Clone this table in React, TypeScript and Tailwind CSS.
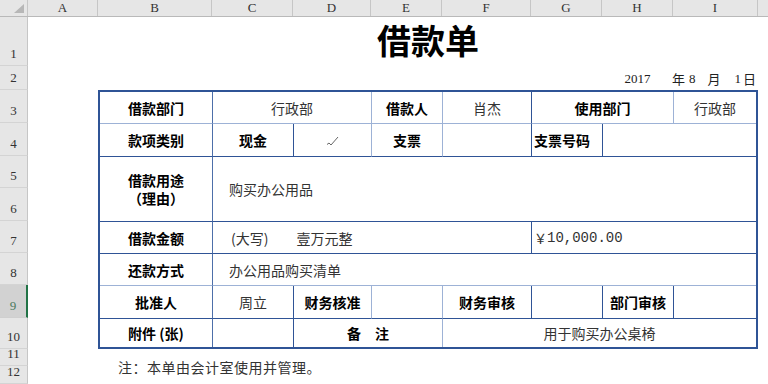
import type { ReactNode } from 'react';

// border edge styles for the loan form
const R_DARK = 'border-r border-r-[#2f5496]';
const R_MED = 'border-r border-r-[#4d6fa9]';
const R_LIGHT = 'border-r border-r-[#9db2d6]';
const B_DARK = 'border-b border-b-[#2f5496]';
const B_LIGHT = 'border-b border-b-[#9db2d6]';

const cols = [
  { label: 'A', w: 'w-[70px]' },
  { label: 'B', w: 'w-[114px]' },
  { label: 'C', w: 'w-[81px]' },
  { label: 'D', w: 'w-[78px]' },
  { label: 'E', w: 'w-[71px]' },
  { label: 'F', w: 'w-[89px]' },
  { label: 'G', w: 'w-[71px]' },
  { label: 'H', w: 'w-[71px]' },
  { label: 'I', w: 'w-[85px]' },
];

const rows = [
  { n: 1, h: 'h-[49px]' },
  { n: 2, h: 'h-[24px]' },
  { n: 3, h: 'h-[33px]' },
  { n: 4, h: 'h-[33px]' },
  { n: 5, h: 'h-[32px]' },
  { n: 6, h: 'h-[33px]' },
  { n: 7, h: 'h-[32px]' },
  { n: 8, h: 'h-[32px]' },
  { n: 9, h: 'h-[33px]' },
  { n: 10, h: 'h-[31px]' },
  { n: 11, h: 'h-[17px]' },
  { n: 12, h: 'h-[18px]' },
];

const Cell = ({ className = '', children }: { className?: string; children?: ReactNode }) => (
  <div className={`flex items-center text-[14px] leading-none ${className}`}>{children}</div>
);

const Label = ({ className = '', children }: { className?: string; children?: ReactNode }) => (
  <Cell className={`justify-center font-bold text-black ${className}`}>{children}</Cell>
);

const Value = ({ className = '', children }: { className?: string; children?: ReactNode }) => (
  <Cell className={`text-[#333] ${className}`}>{children}</Cell>
);

const Check = () => (
  <svg width="13" height="11" viewBox="0 0 13 11" className="mt-[2px]">
    <polyline points="1,8.5 3,7 5,9 12,1" fill="none" stroke="#666" strokeWidth="1" />
  </svg>
);

const App = () => {
  return (
    <div className="w-[768px] h-[384px] overflow-hidden bg-white flex flex-col font-['Noto_Sans_CJK_SC',sans-serif]">
      {/* column headers */}
      <div className="flex h-[17px] shrink-0 bg-[#e6e6e6] border-b border-[#b9b9b9] font-['Liberation_Serif',serif] text-[13px] text-[#333]">
        <div className="w-[28px] border-r border-[#c6c6c6] flex items-end justify-end pr-[3px] pb-[3px]">
          <svg width="10" height="9" viewBox="0 0 10 9">
            <polygon points="10,0 10,9 0,9" fill="#b7b7b7" />
          </svg>
        </div>
        {cols.map((c) => (
          <div key={c.label} className={`${c.w} border-r border-[#c6c6c6] flex items-center justify-center`}>
            {c.label}
          </div>
        ))}
        <div className="flex-1" />
      </div>

      <div className="flex flex-1">
        {/* row headers */}
        <div className="w-[28px] shrink-0 flex flex-col bg-[#e6e6e6] font-['Liberation_Serif',serif] text-[13px] text-[#333]">
          {rows.map((r) =>
            r.n === 9 ? (
              <div key={r.n} className={`${r.h} flex items-end justify-center pb-[2px] bg-[#d2d2d2] text-[#4b7a5f] border-r-2 border-r-[#217346] border-b border-b-[#cfcfcf]`}>
                {r.n}
              </div>
            ) : (
              <div key={r.n} className={`${r.h} flex items-end justify-center pb-[2px] border-r border-r-[#c6c6c6] border-b border-b-[#d4d4d4]`}>
                {r.n}
              </div>
            )
          )}
        </div>

        {/* sheet */}
        <div className="flex-1 grid grid-cols-[70px_114px_81px_78px_71px_89px_71px_71px_85px_1fr] grid-rows-[49px_24px_33px_33px_32px_33px_32px_32px_33px_31px_17px_18px]">
          <div className="col-start-2 col-span-8 row-start-1 flex items-center justify-center pb-[3px] text-[34px] font-bold leading-none text-black">
            借款单
          </div>

          <div className="col-start-8 row-start-2 flex items-center justify-center pt-[2px] font-['Liberation_Serif',serif] text-[13px] text-[#222]">
            2017
          </div>
          <div className="col-start-9 row-start-2 flex items-center ml-[-1px] pt-[2px] text-[13px] text-[#222]">
            <span>年</span>
            <span className="ml-[4px] font-['Liberation_Serif',serif]">8</span>
            <span className="ml-[12px]">月</span>
            <span className="ml-[14px] font-['Liberation_Serif',serif]">1</span>
            <span className="ml-[2px]">日</span>
          </div>

          {/* form table */}
          <div className="col-start-2 col-span-8 row-start-3 row-span-8 border-2 border-[#2f5496] grid grid-cols-[113px_81px_78px_71px_89px_71px_71px_82px] grid-rows-[32px_33px_32px_33px_32px_32px_33px_28px]">
            {/* row 3 */}
            <Label className={`${R_MED} ${B_LIGHT}`}>借款部门</Label>
            <Value className={`col-span-2 justify-center ${R_LIGHT} ${B_LIGHT}`}>行政部</Value>
            <Label className={`${R_LIGHT} ${B_LIGHT}`}>借款人</Label>
            <Value className={`justify-center ${R_DARK} ${B_LIGHT}`}>肖杰</Value>
            <Label className={`col-span-2 ${R_LIGHT} ${B_LIGHT}`}>使用部门</Label>
            <Value className={`justify-center ${B_LIGHT}`}>行政部</Value>

            {/* row 4 */}
            <Label className={`${R_MED} ${B_DARK}`}>款项类别</Label>
            <Label className={`${R_DARK} ${B_DARK}`}>现金</Label>
            <Value className={`justify-center ${R_LIGHT} ${B_DARK}`}>
              <Check />
            </Value>
            <Label className={`${R_LIGHT} ${B_DARK}`}>支票</Label>
            <Value className={`${R_DARK} ${B_DARK}`} />
            <Label className={`!justify-start pl-[2px] ${R_DARK} ${B_DARK}`}>支票号码</Label>
            <Value className={`col-span-2 ${B_DARK}`} />

            {/* rows 5-6 */}
            <Label className={`row-span-2 flex-col gap-[3px] ${R_MED} ${B_DARK}`}>
              <span className="block leading-[15px]">借款用途</span>
              <span className="block leading-[15px]">（理由）</span>
            </Label>
            <Value className={`col-span-7 row-span-2 pl-[16px] ${B_DARK}`}>购买办公用品</Value>

            {/* row 7 */}
            <Label className={`${R_MED} ${B_DARK}`}>借款金额</Label>
            <Value className={`col-span-4 pl-[18px] ${R_DARK} ${B_DARK}`}>
              <span>(大写)</span>
              <span className="ml-[28px]">壹万元整</span>
            </Value>
            <Value className={`col-span-3 pl-[2px] font-['Liberation_Mono',monospace] text-[12px] ${B_DARK}`}>
              <span className="font-['Noto_Sans_CJK_SC',sans-serif] text-[13px]">￥</span>10,000.00
            </Value>

            {/* row 8 */}
            <Label className={`${R_MED} ${B_LIGHT}`}>还款方式</Label>
            <Value className={`col-span-7 pl-[16px] ${B_LIGHT}`}>办公用品购买清单</Value>

            {/* row 9 */}
            <Label className={`${R_MED} ${B_DARK}`}>批准人</Label>
            <Value className={`justify-center ${R_DARK} ${B_DARK}`}>周立</Value>
            <Label className={`${R_LIGHT} ${B_DARK}`}>财务核准</Label>
            <Value className={`${R_LIGHT} ${B_DARK}`} />
            <Label className={`${R_DARK} ${B_DARK}`}>财务审核</Label>
            <Value className={`${R_DARK} ${B_DARK}`} />
            <Label className={`${R_DARK} ${B_DARK}`}>部门审核</Label>
            <Value className={B_DARK} />

            {/* row 10 */}
            <Label className={R_MED}>附件 (张)</Label>
            <Value className={R_DARK} />
            <Label className={`col-span-2 ${R_LIGHT}`}>备　注</Label>
            <Value className="col-span-4 justify-center">用于购买办公桌椅</Value>
          </div>

          <div className="col-start-2 col-span-8 row-start-11 row-span-2 pl-[20px] pt-[11px] text-[14px] leading-none text-[#333] tracking-[0.5px]">
            注：本单由会计室使用并管理。
          </div>
        </div>
      </div>
    </div>
  );
};

export default App;
